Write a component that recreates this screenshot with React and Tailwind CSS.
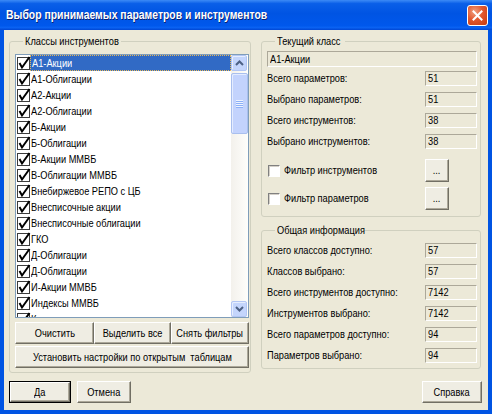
import React from "react";

const items = [
  "А1-Акции",
  "А1-Облигации",
  "А2-Акции",
  "А2-Облигации",
  "Б-Акции",
  "Б-Облигации",
  "В-Акции ММВБ",
  "В-Облигации ММВБ",
  "Внебиржевое РЕПО с ЦБ",
  "Внесписочные акции",
  "Внесписочные облигации",
  "ГКО",
  "Д-Облигации",
  "Д-Облигации",
  "И-Акции ММВБ",
  "Индексы ММВБ",
  "Кросс-курсы валют",
];

const currentRows = [
  ["Всего параметров:", "51"],
  ["Выбрано параметров:", "51"],
  ["Всего инструментов:", "38"],
  ["Выбрано инструментов:", "38"],
];

const totalRows = [
  ["Всего классов доступно:", "57"],
  ["Классов выбрано:", "57"],
  ["Всего инструментов доступно:", "7142"],
  ["Инструментов выбрано:", "7142"],
  ["Всего параметров доступно:", "94"],
  ["Параметров выбрано:", "94"],
];

// the dialog font is narrower than anything installed, so squeeze it a bit
const Txt = ({ children, left }) => (
  <span className={`inline-block whitespace-nowrap scale-x-[0.84] ${left ? "origin-left" : "origin-center"}`}>
    {children}
  </span>
);

const ListCheck = () => (
  <svg width="13" height="13" viewBox="0 0 13 13" className="shrink-0 overflow-visible">
    <rect x="0.5" y="0.5" width="12" height="12" fill="#fff" stroke="#3c3c3c" />
    <polyline points="2.5,6 5,10.5 12.5,0" fill="none" stroke="#000" strokeWidth="2" />
  </svg>
);

const Btn = ({ children, className = "" }) => (
  <button
    className={`flex items-center justify-center whitespace-nowrap bg-[#efede3] border border-t-white border-l-white border-r-[#716f64] border-b-[#716f64] shadow-[inset_-1px_-1px_0_#aca899] text-[11px] text-black ${className}`}
  >
    <Txt>{children}</Txt>
  </button>
);

const Field = ({ children, className = "" }) => (
  <div
    className={`flex items-center px-[2px] bg-[#ece9d8] border border-t-[#aca899] border-l-[#aca899] border-r-white border-b-white text-[11px] leading-none ${className}`}
  >
    <Txt left>{children}</Txt>
  </div>
);

const Row = ({ label, value }) => (
  <div className="flex items-center justify-between h-[15px]">
    <span className="text-[11px]">
      <Txt left>{label}</Txt>
    </span>
    <Field className="w-[52px] h-[15px]">{value}</Field>
  </div>
);

const Group = ({ title, w, className = "", children }) => (
  <fieldset className={`border border-[#d0d0bf] rounded-[3px] ${className}`}>
    <legend className={`ml-[8px] px-[2px] text-[11px] leading-[13px] ${w}`}>
      <Txt left>{title}</Txt>
    </legend>
    {children}
  </fieldset>
);

const FilterRow = ({ label }) => (
  <div className="flex items-center justify-between h-[23px]">
    <div className="flex items-center gap-[4px] pl-[1px]">
      <span className="w-[12px] h-[12px] bg-white border border-t-[#808080] border-l-[#808080] border-r-white border-b-white shadow-[inset_1px_1px_0_#d4d0c8]" />
      <span className="text-[11px]">
        <Txt left>{label}</Txt>
      </span>
    </div>
    <Btn className="w-[24px] h-[23px] mr-[28px]">...</Btn>
  </div>
);

const ArrowBtn = ({ up }) => (
  <div className="w-[16px] h-[16px] flex items-center justify-center rounded-[2px] bg-[#c4d5fc] border border-[#b3c6f4] shadow-[inset_1px_1px_0_#e6eefe]">
    <svg width="9" height="6" viewBox="0 0 9 6">
      <polyline
        points={up ? "1,5 4.5,1.5 8,5" : "1,1 4.5,4.5 8,1"}
        fill="none"
        stroke="#4d6185"
        strokeWidth="2"
      />
    </svg>
  </div>
);

export default function App() {
  return (
    <div className="w-[492px] h-[414px] flex flex-col bg-[#0054e3] font-['Liberation_Sans',sans-serif] text-black">
      {/* Title bar */}
      <div className="h-[30px] shrink-0 flex items-center justify-between pl-[6px] pr-[4px] bg-[linear-gradient(180deg,#3d8bf6_0%,#0a5fe8_12%,#0054e3_45%,#0058ec_85%,#0a62f2_92%,#0046d4_100%)]">
        <span className="inline-block whitespace-nowrap origin-left scale-x-[0.8] text-white font-bold text-[13px] [text-shadow:1px_1px_0_#0a1f6e]">
          Выбор принимаемых параметров и инструментов
        </span>
        <div className="w-[21px] h-[21px] rounded-[3px] border border-white bg-[radial-gradient(circle_at_35%_30%,#f0a080_0%,#e2582f_45%,#c63a10_100%)] flex items-center justify-center">
          <svg width="11" height="11" viewBox="0 0 11 11">
            <path d="M1.5 1.5 L9.5 9.5 M9.5 1.5 L1.5 9.5" stroke="#fff" strokeWidth="2" strokeLinecap="square" />
          </svg>
        </div>
      </div>

      {/* Client area */}
      <div className="flex-1 mx-[4px] mb-[4px] bg-[#ece9d8] flex flex-col pt-[5px]">
        <div className="flex items-start pl-[5px] gap-[10px]">
          {/* Left group */}
          <Group title="Классы инструментов" w="w-[98px]" className="w-[242px] pl-[5px] pr-[1px] pt-[6px] pb-[4px]">
            <div className="w-[234px] h-[264px] border border-[#7f9db9] bg-white flex">
              <div className="flex-1 overflow-hidden">
                {items.map((it, i) => (
                  <div key={i} className="h-[16px] flex items-center pl-[1px]">
                    <ListCheck />
                    <div
                      className={`flex-1 h-[16px] flex items-center pl-[1px] text-[11px] whitespace-nowrap ${
                        i === 0
                          ? "bg-[#316ac5] text-white border border-dotted border-[#e8b858]"
                          : ""
                      }`}
                    >
                      <Txt left>{it}</Txt>
                    </div>
                  </div>
                ))}
              </div>
              <div className="w-[17px] flex flex-col bg-[linear-gradient(90deg,#f3f1ec,#fefefb)]">
                <ArrowBtn up />
                <div className="flex-1 pt-[2px]">
                  <div className="h-[61px] rounded-[2px] bg-[#c3d3fd] border border-[#a9bfee] shadow-[inset_1px_1px_0_#e4ecff] flex flex-col items-center justify-center gap-[1px]">
                    {[0, 1, 2, 3].map((k) => (
                      <div key={k} className="w-[7px] h-[1px] bg-[#eef3fe] shadow-[0_1px_0_#8cb0f8]" />
                    ))}
                  </div>
                </div>
                <ArrowBtn />
              </div>
            </div>
            <div className="flex mt-[4px] h-[22px]">
              <Btn className="w-[79px]">Очистить</Btn>
              <Btn className="w-[77px]">Выделить все</Btn>
              <Btn className="w-[78px]">Снять фильтры</Btn>
            </div>
            <Btn className="w-[234px] h-[22px] mt-[2px]">Установить настройки по открытым&nbsp; таблицам</Btn>
          </Group>

          {/* Right column */}
          <div className="w-[220px] flex flex-col gap-[7px]">
            <Group title="Текущий класс" w="w-[70px]" className="pl-[5px] pr-[3px] pt-[3px] pb-[6px]">
              <Field className="h-[16px]">А1-Акции</Field>
              <div className="flex flex-col gap-[6px] mt-[4px]">
                {currentRows.map(([l, v]) => (
                  <Row key={l} label={l} value={v} />
                ))}
              </div>
              <div className="flex flex-col gap-[5px] mt-[10px]">
                <FilterRow label="Фильтр инструментов" />
                <FilterRow label="Фильтр параметров" />
              </div>
            </Group>
            <Group title="Общая информация" w="w-[88px]" className="pl-[5px] pr-[3px] pt-[6px] pb-[5px]">
              <div className="flex flex-col gap-[6px]">
                {totalRows.map(([l, v]) => (
                  <Row key={l} label={l} value={v} />
                ))}
              </div>
            </Group>
          </div>
        </div>

        {/* Bottom buttons */}
        <div className="flex items-center mt-[8px] pl-[5px] pr-[6px]">
          <div className="border border-black">
            <Btn className="w-[60px] h-[20px]">Да</Btn>
          </div>
          <Btn className="w-[54px] h-[22px] ml-[6px]">Отмена</Btn>
          <Btn className="w-[60px] h-[22px] ml-auto">Справка</Btn>
        </div>
      </div>
    </div>
  );
}
